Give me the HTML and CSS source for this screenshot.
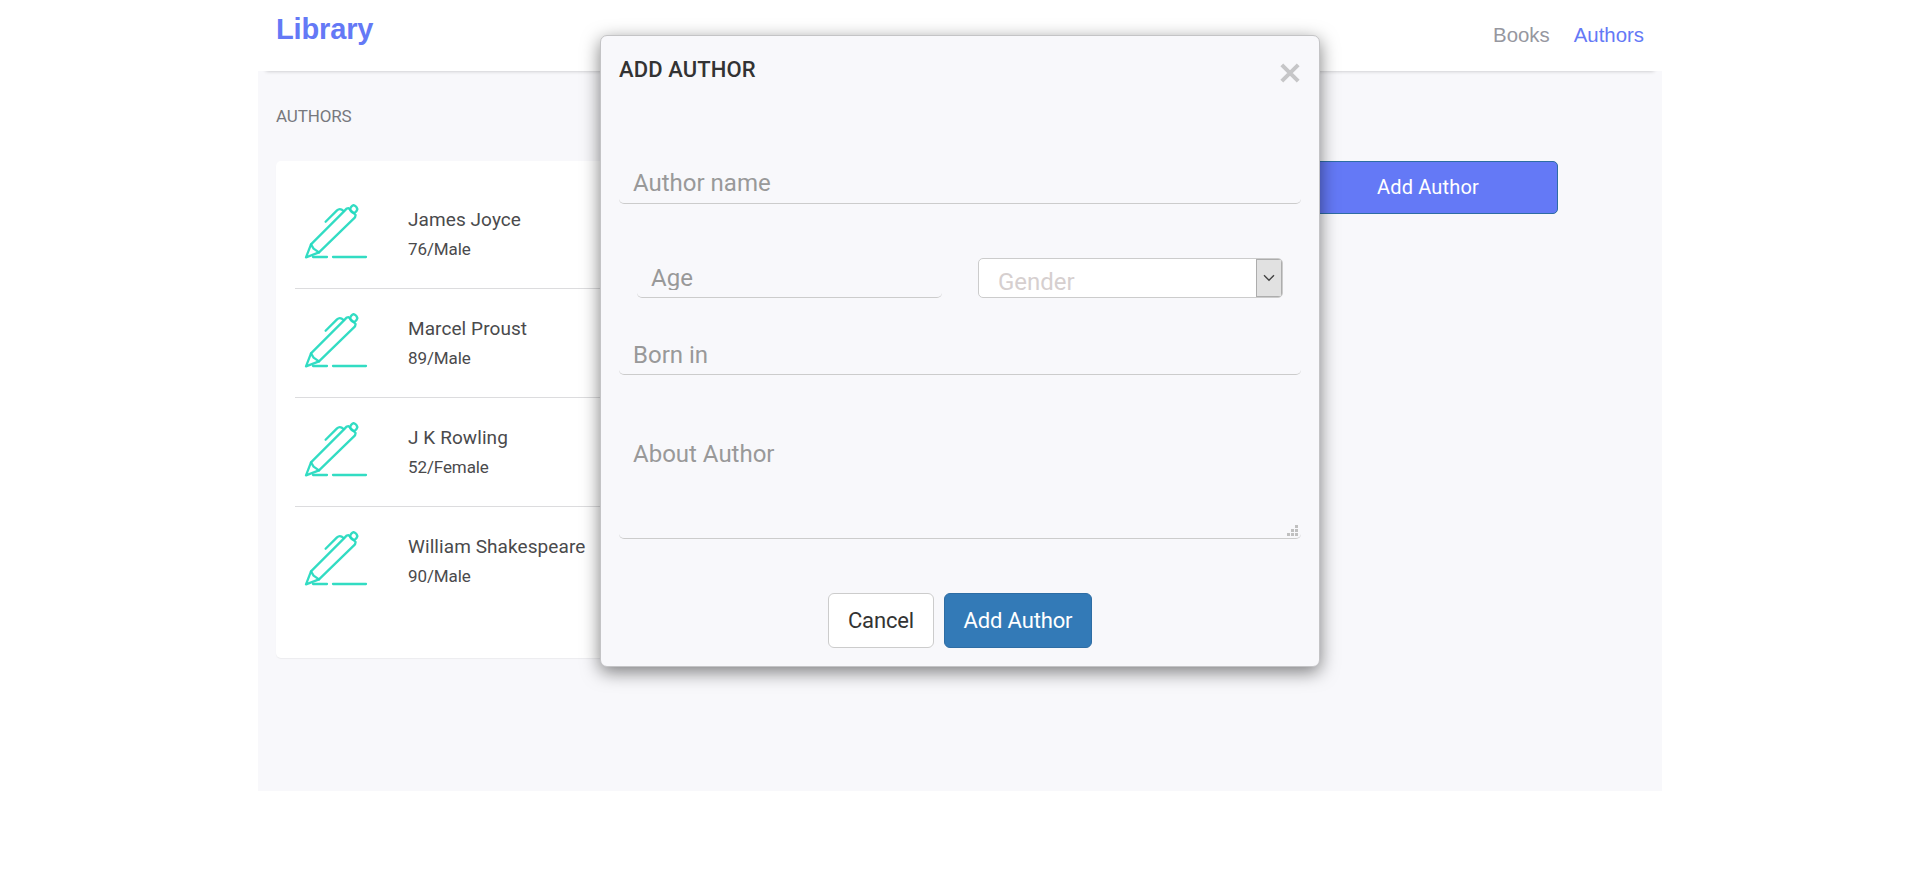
FILE: index.html
```html
<!DOCTYPE html>
<html lang="en">
<head>
<meta charset="utf-8">
<title>Library</title>
<link rel="stylesheet" href="styles.css">
</head>
<body>
<svg width="0" height="0" class="defs">
  <symbol id="pen" viewBox="0 0 64 56">
    <g fill="none" stroke="#22d9be" stroke-opacity=".93" stroke-width="2.3" stroke-linecap="round" stroke-linejoin="round">
      <path d="M7 41.4 40 8.4 42.6 5.6 44.6 5.2 51.6 12 51 14.4 15 49.4 2 54.4Z"/>
      <path d="M7 41.4 9.6 45.6 15 49.4"/>
      <path d="M21.6 18.8 33 7.4Q36 4.6 39.6 8"/>
      <path d="M46 6.2Q47.4 2.6 49.6 2.2 52.4 3 53.4 6.2 52.4 9.4 49.8 10 46.8 9.2 46 6.2Z"/>
      <path d="M9 54H23M29 54H62"/>
    </g>
  </symbol>
</svg>
<div class="page">
  <header class="header">
    <div class="brand">Library</div>
    <nav class="nav">
      <a class="nav-link">Books</a>
      <a class="nav-link nav-active">Authors</a>
    </nav>
  </header>
  <main class="main">
    <h2 class="section-title">AUTHORS</h2>
    <div class="columns">
      <section class="card">
        <div class="row"><svg class="pen"><use href="#pen"/></svg><div class="info"><div class="name">James Joyce</div><div class="meta">76/Male</div></div></div>
        <div class="row"><svg class="pen"><use href="#pen"/></svg><div class="info"><div class="name">Marcel Proust</div><div class="meta">89/Male</div></div></div>
        <div class="row"><svg class="pen"><use href="#pen"/></svg><div class="info"><div class="name">J K Rowling</div><div class="meta">52/Female</div></div></div>
        <div class="row"><svg class="pen"><use href="#pen"/></svg><div class="info"><div class="name">William Shakespeare</div><div class="meta">90/Male</div></div></div>
      </section>
      <button class="add-button">Add Author</button>
    </div>
  </main>
</div>
<div class="modal">
  <div class="modal-head">
    <h4 class="modal-title">ADD AUTHOR</h4>
    <svg class="close" viewBox="0 0 20 20"><path d="M1.8 1.8 18.2 18.2M18.2 1.8 1.8 18.2" stroke="#c6c6c8" stroke-width="4"/></svg>
  </div>
  <div class="field field-name">Author name</div>
  <div class="pair">
    <div class="field field-age"><span class="clip">Age</span></div>
    <div class="select">
      <span class="select-text">Gender</span>
      <span class="select-arrow"><svg width="12" height="8" viewBox="0 0 12 8"><path d="M1 1.2 6 6.2 11 1.2" fill="none" stroke="#444" stroke-width="1.4"/></svg></span>
    </div>
  </div>
  <div class="field field-born">Born in</div>
  <div class="field field-about">About Author
    <svg class="grip" viewBox="0 0 11 11"><path fill="#c0c0c0" d="M8 0h3v3H8zM4 4h3v3H4zM8 4h3v3H8zM0 8h3v3H0zM4 8h3v3H4zM8 8h3v3H8z"/></svg>
  </div>
  <div class="actions">
    <button class="btn btn-cancel">Cancel</button>
    <button class="btn btn-primary">Add Author</button>
  </div>
</div>
</body>
</html>
```
FILE: styles.css
```css
* { box-sizing: border-box; }
body { margin: 0; background: #fff; font-family: Roboto, sans-serif; position: relative; }
.defs { position: absolute; }
.page { width: 1404px; margin-left: 258px; }
.header {
  height: 71px; padding: 0 18px; display: flex; justify-content: space-between;
  font-family: "Liberation Sans", Arial, sans-serif; background: #fff;
  position: relative; box-shadow: 0 8px 4px -8px rgba(0, 0, 0, .24);
}
.brand { font-size: 29px; letter-spacing: -.15px; font-weight: 700; color: #6479f6; line-height: 34px; padding-top: 12px; }
.nav { display: flex; gap: 24px; font-size: 20.4px; line-height: 24px; padding-top: 23px; }
.nav-link { color: #96979f; }
.nav-active { color: #6479f6; }
.main { height: 720px; background: #f8f8fb; padding: 0 18px; }
.section-title { margin: 0; padding-top: 34px; height: 90px; font-size: 17px; letter-spacing: -.15px; font-weight: 400; line-height: 22px; color: #77787e; }
.columns { display: flex; align-items: flex-start; justify-content: space-between; padding-right: 86px; }
.card { width: 900px; height: 497px; padding: 19px; background: #fff; border-radius: 5px; box-shadow: 0 1px 1px rgba(0, 0, 0, .05); }
.row { height: 109px; display: flex; padding: 23px 0 0 9px; border-bottom: 1px solid #dcdcde; }
.row:last-child { border-bottom: 0; }
.pen { width: 64px; height: 56px; flex: none; margin-right: 40px; }
.info { color: #4a4a4c; padding-top: 2px; }
.name { font-size: 19px; letter-spacing: .08px; line-height: 30px; }
.meta { font-size: 17px; letter-spacing: -.1px; line-height: 28px; }
.add-button {
  width: 262px; height: 53px; padding: 0 0 0 2px; background: #6479f6; color: #fff; border: 1px solid #2e6da4;
  border-radius: 5px; font: 20px/51px Roboto, sans-serif; letter-spacing: .15px;
}
.modal {
  position: absolute; left: 600px; top: 35px; width: 720px; height: 632px; padding: 0 18px;
  background: #f8f8fb; border: 1px solid #c4c4c6;
  border-radius: 7px; box-shadow: 0 5px 18px rgba(0, 0, 0, .5);
}
.modal-head { display: flex; justify-content: space-between; height: 126px; padding-top: 19px; }
.modal-title { margin: 0; font-size: 22px; letter-spacing: .1px; font-weight: 500; line-height: 29px; color: #333; }
.close { width: 20px; height: 20px; margin: 8px 1px 0 0; }
.field { border-bottom: 1px solid #ccc; border-radius: 5px; padding: 0 14px; font-size: 24px; color: #999; }
.field-name { height: 42px; line-height: 42px; }
.pair { display: flex; gap: 36px; padding: 54px 18px 0; height: 94px; }
.field-age { width: 305px; padding-top: 8px; }
.clip { display: block; line-height: 24px; height: 24px; overflow: hidden; }
.select { width: 305px; display: flex; justify-content: space-between; background: #fff; border: 1px solid #ccc; border-radius: 5px; overflow: hidden; }
.select-text { padding-left: 19px; font-size: 24px; line-height: 46px; color: #d6cfcf; }
.select-arrow { width: 26px; display: flex; align-items: center; justify-content: center; background: #e1e1e1; border: 1px solid #adadad; }
.field-born { height: 42px; line-height: 44px; margin-top: 35px; }
.field-about { position: relative; height: 104px; line-height: 38px; margin-top: 60px; }
.grip { position: absolute; right: 3px; bottom: 2px; width: 11px; height: 11px; }
.actions { display: flex; justify-content: center; gap: 10px; padding-top: 54px; }
.btn { height: 55px; padding: 0; border-radius: 6px; font: 22px/53px Roboto, sans-serif; letter-spacing: -.15px; }
.btn-cancel { width: 106px; background: #fff; border: 1px solid #ccc; color: #333; }
.btn-primary { width: 148px; background: #337ab7; border: 1px solid #2e6da4; color: #fff; }
```
